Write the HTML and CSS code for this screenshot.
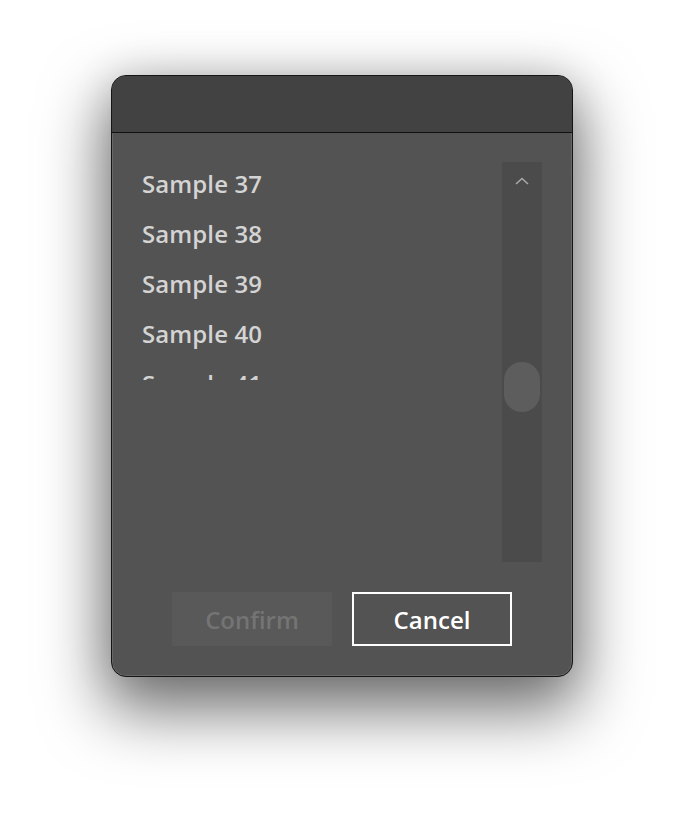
FILE: index.html
```html
<!DOCTYPE html>
<html>
<head>
<meta charset="utf-8">
<link rel="stylesheet" href="styles.css">
</head>
<body>
<div class="dialog">
  <div class="header"></div>
  <div class="content">
    <div class="picker">
      <div class="list">
        <div class="item">Sample 37</div>
        <div class="item">Sample 38</div>
        <div class="item">Sample 39</div>
        <div class="item">Sample 40</div>
        <div class="item">Sample 41</div>
      </div>
      <div class="track">
        <svg class="chevron" width="16" height="10" viewBox="0 0 16 10"><path d="M2 8 L8 2.5 L14 8" fill="none" stroke="#a8a8a8" stroke-width="1.6"/></svg>
        <div class="thumb"></div>
      </div>
    </div>
    <div class="actions">
      <button class="btn confirm">Confirm</button>
      <button class="btn cancel">Cancel</button>
    </div>
  </div>
</div>
</body>
</html>
```
FILE: styles.css
```css
html, body {
  margin: 0;
  padding: 0;
  background: #ffffff;
}
body {
  width: 684px;
  height: 824px;
  padding-top: 75px;
  box-sizing: border-box;
  display: flex;
  justify-content: center;
  align-items: flex-start;
  font-family: "Open Sans", "DejaVu Sans", sans-serif;
  overflow: hidden;
}
.dialog {
  width: 462px;
  height: 602px;
  box-sizing: border-box;
  border: 1px solid #151515;
  border-radius: 15px;
  background: #535353;
  box-shadow: inset 0 0 0 1px rgba(255,255,255,0.12), 0 28px 64px 6px rgba(0,0,0,0.55), 0 0 40px rgba(0,0,0,0.12);
  overflow: hidden;
  display: flex;
  flex-direction: column;
}
.header {
  height: 56px;
  background: #424242;
  border-bottom: 1px solid #111;
  flex: none;
}
.content {
  flex: 1;
  display: flex;
  flex-direction: column;
  padding: 29px 30px 30px 30px;
}
.picker {
  display: flex;
  justify-content: space-between;
  height: 400px;
}
.list {
  height: 218px;
  overflow: hidden;
  width: 300px;
}
.item {
  height: 50px;
  line-height: 44px;
  font-size: 24px;
  font-weight: 600;
  letter-spacing: 0.1px;
  color: #d4d4d4;
}
.track {
  width: 40px;
  height: 400px;
  background: #4b4b4b;
  display: flex;
  flex-direction: column;
  align-items: center;
}
.chevron {
  margin-top: 14px;
  flex: none;
}
.thumb {
  margin-top: 176px;
  width: 36px;
  height: 50px;
  border-radius: 18px;
  background: #5d5d5d;
}
.actions {
  margin-top: 30px;
  display: flex;
  justify-content: center;
  gap: 20px;
}
.btn {
  width: 160px;
  height: 54px;
  box-sizing: border-box;
  font-family: "Open Sans", "DejaVu Sans", sans-serif;
  font-size: 24px;
  font-weight: 600;
  padding: 0;
  margin: 0;
}
.confirm {
  background: #595959;
  border: none;
  color: #747474;
}
.cancel {
  background: transparent;
  border: 2px solid #ffffff;
  color: #ffffff;
}
```
